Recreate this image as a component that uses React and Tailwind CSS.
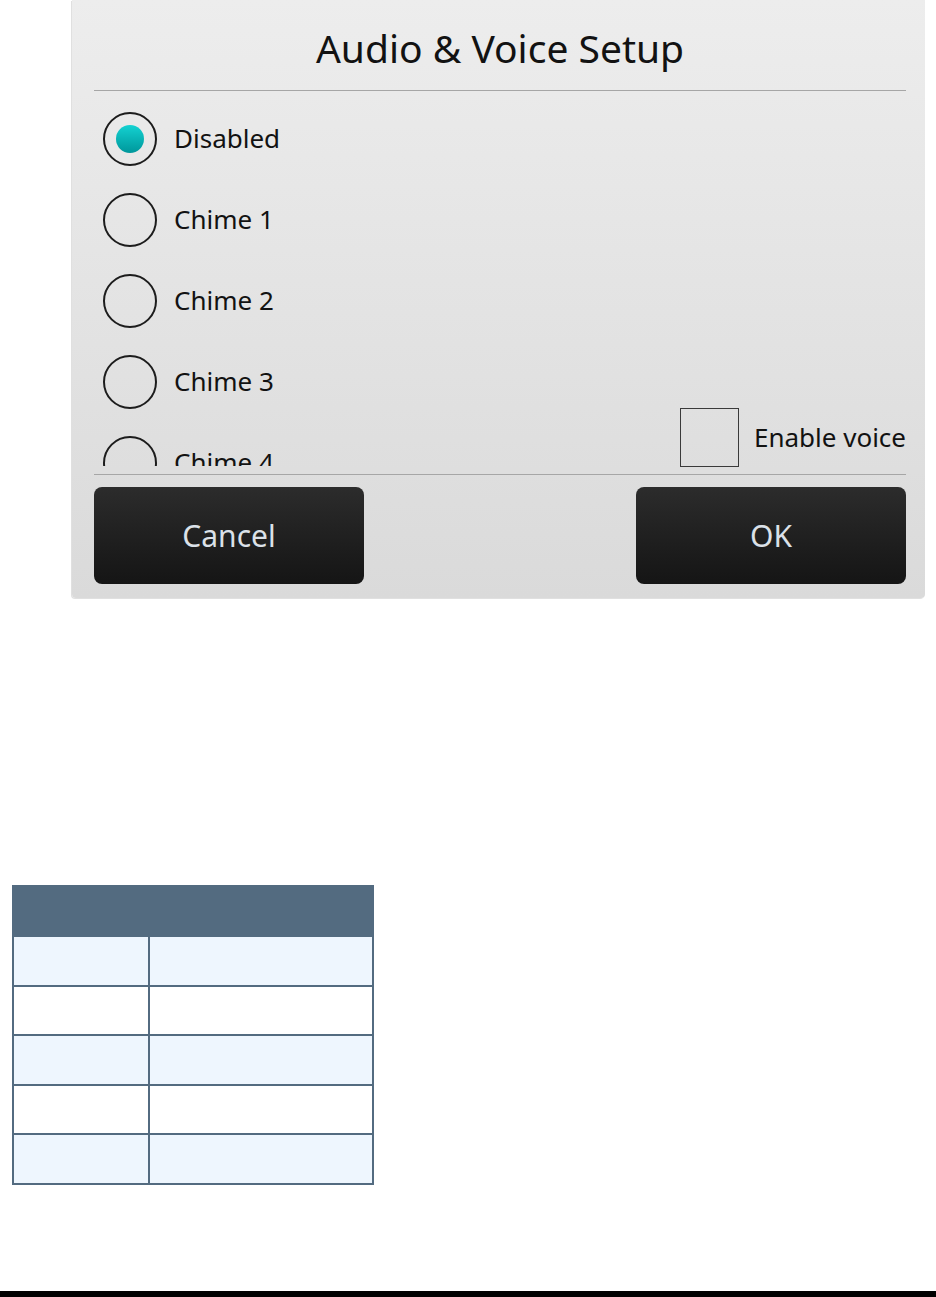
import React, { useState } from "react";

const chimes = ["Disabled", "Chime 1", "Chime 2", "Chime 3", "Chime 4"];

function Radio({ label, checked, onSelect }) {
    return (
        <button onClick={onSelect} className="h-[81px] flex items-center pl-[9px] gap-[17px] text-left shrink-0">
            <span className="w-[54px] h-[54px] rounded-full border-2 border-[#1c1c1c] flex items-center justify-center shrink-0">
                {checked && <span className="w-[28px] h-[28px] rounded-full bg-gradient-to-b from-[#14d2d2] to-[#00979b]"></span>}
            </span>
            <span className="text-[26px] text-[#121212]">{label}</span>
        </button>
    );
}

export default function App() {
    const [selected, setSelected] = useState("Disabled");
    const [voice, setVoice] = useState(false);

    return (
        <div className="h-[1297px] flex flex-col bg-white font-['Noto_Sans',sans-serif]">
            <div className="ml-[72px] w-[853px] h-[598px] pl-[22px] pr-[19px] flex flex-col rounded-b-[4px] bg-gradient-to-b from-[#ededed] to-[#dadada] shadow-[-1px_1px_0_rgba(0,0,0,0.12)]">
                <div className="h-[91px] flex justify-center border-b border-[#a6a6a6]">
                    <h1 className="text-[39px] leading-[58px] pt-[19px] text-[#121212]">Audio &amp; Voice Setup</h1>
                </div>

                <div className="h-[384px] flex justify-between items-start border-b border-[#a6a6a6]">
                    <div className="h-[375px] flex flex-col pt-[7px] overflow-hidden">
                        {chimes.map((c) => (
                            <Radio key={c} label={c} checked={selected === c} onSelect={() => setSelected(c)} />
                        ))}
                    </div>
                    <button onClick={() => setVoice(!voice)} className="self-end flex items-center gap-[15px] pb-[7px]">
                        <span className="w-[59px] h-[59px] border-[1.5px] border-[#3a3a3a] flex items-center justify-center text-[36px] text-[#00979b]">
                            {voice ? "✓" : ""}
                        </span>
                        <span className="text-[26px] text-[#121212]">Enable voice</span>
                    </button>
                </div>

                <div className="flex justify-between pt-[12px]">
                    <button className="w-[270px] h-[97px] rounded-[8px] bg-gradient-to-b from-[#2c2c2c] to-[#151515] text-[30px] text-[#dbe1e8]">
                        Cancel
                    </button>
                    <button className="w-[270px] h-[97px] rounded-[8px] bg-gradient-to-b from-[#2c2c2c] to-[#151515] text-[30px] text-[#dbe1e8]">
                        OK
                    </button>
                </div>
            </div>

            <table className="ml-[12px] mt-[287px] w-[362px] border-collapse">
                <thead>
                    <tr className="h-[50px] bg-[#536b80]">
                        <th colSpan={2} className="border-2 border-[#536b80]"></th>
                    </tr>
                </thead>
                <tbody>
                    {[0, 1, 2, 3, 4].map((i) => (
                        <tr key={i} className={i % 2 === 0 ? "h-[49.6px] bg-[#eef6fe]" : "h-[49.6px] bg-white"}>
                            <td className="w-[136px] border-2 border-[#536b80]"></td>
                            <td className="border-2 border-[#536b80]"></td>
                        </tr>
                    ))}
                </tbody>
            </table>

            <div className="mt-auto h-[6px] bg-black"></div>
        </div>
    );
}
